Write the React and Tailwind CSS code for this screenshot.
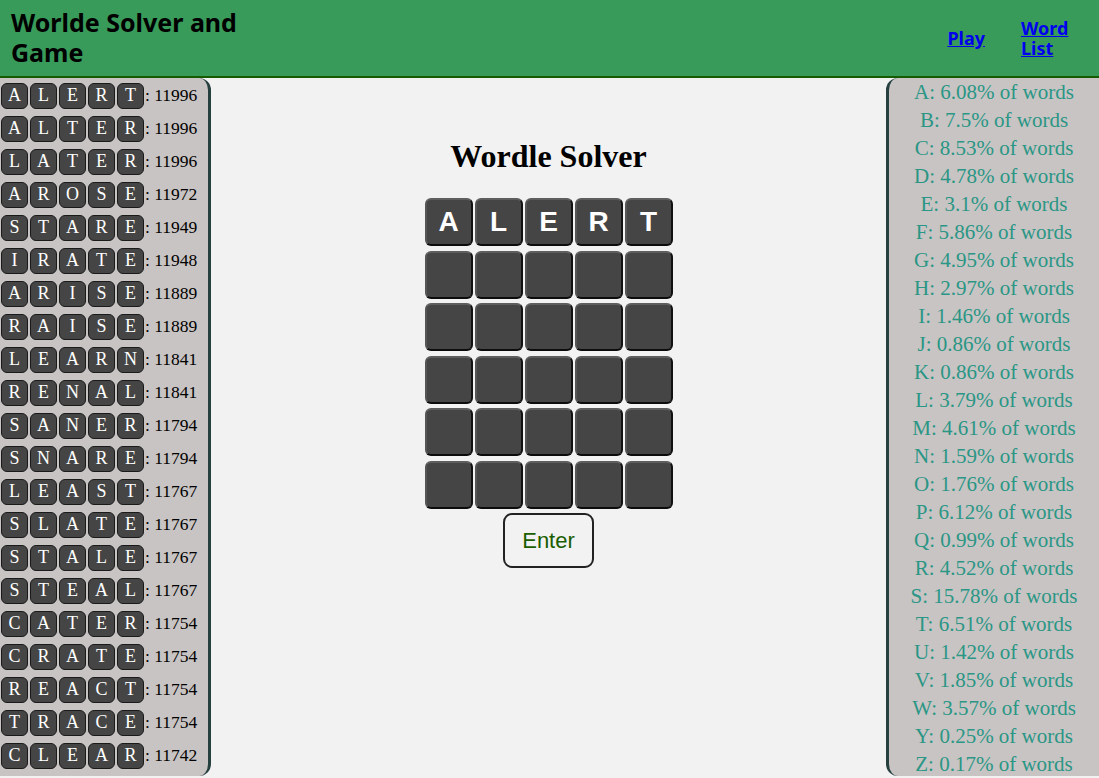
import React from "react";

const words = [
  ["ALERT", 11996],
  ["ALTER", 11996],
  ["LATER", 11996],
  ["AROSE", 11972],
  ["STARE", 11949],
  ["IRATE", 11948],
  ["ARISE", 11889],
  ["RAISE", 11889],
  ["LEARN", 11841],
  ["RENAL", 11841],
  ["SANER", 11794],
  ["SNARE", 11794],
  ["LEAST", 11767],
  ["SLATE", 11767],
  ["STALE", 11767],
  ["STEAL", 11767],
  ["CATER", 11754],
  ["CRATE", 11754],
  ["REACT", 11754],
  ["TRACE", 11754],
  ["CLEAR", 11742],
];

const freqs = [
  ["A", "6.08"], ["B", "7.5"], ["C", "8.53"], ["D", "4.78"], ["E", "3.1"],
  ["F", "5.86"], ["G", "4.95"], ["H", "2.97"], ["I", "1.46"], ["J", "0.86"],
  ["K", "0.86"], ["L", "3.79"], ["M", "4.61"], ["N", "1.59"], ["O", "1.76"],
  ["P", "6.12"], ["Q", "0.99"], ["R", "4.52"], ["S", "15.78"], ["T", "6.51"],
  ["U", "1.42"], ["V", "1.85"], ["W", "3.57"], ["Y", "0.25"], ["Z", "0.17"],
];

const guesses = ["ALERT", "", "", "", "", ""];

const WordRow = ({ word, score }) => (
  <div className="flex items-center h-[33px]">
    {word.split("").map((l, i) => (
      <span
        key={i}
        className="w-[27px] h-[26px] ml-[1px] mr-[1px] flex items-center justify-center bg-[#454545] border border-[#1a1a1a] rounded-[6px] text-white text-[18px]"
      >
        {l}
      </span>
    ))}
    <span className="text-[17.5px] text-black">: {score}</span>
  </div>
);

export default function App() {
  return (
    <div className="bg-[#f2f2f2] flex flex-col overflow-hidden h-[778px]">
      <header className="h-[78px] bg-[#389b5a] border-b-2 border-[#155c00] flex items-center justify-between pl-[11px] pr-[30px] shrink-0">
        <h1 className="w-[260px] text-[25px] leading-[30px] font-bold text-black font-['Noto_Sans',sans-serif] pb-[2px]">
          Worlde Solver and Game
        </h1>
        <nav className="flex items-center gap-[36px] font-['Noto_Sans',sans-serif] font-bold text-[18px] leading-[20px]">
          <a href="#" className="text-[#0000ee] underline">
            Play
          </a>
          <a href="#" className="text-[#0000ee] underline w-[48px]">
            Word List
          </a>
        </nav>
      </header>

      <main className="flex flex-1 min-h-0 font-['Liberation_Serif',serif]">
        <aside className="w-[211px] shrink-0 h-[698px] bg-[#c8c4c3] border-r-[3px] border-[#263f3f] rounded-r-[12px] overflow-hidden pt-[1px]">
          {words.map(([w, s]) => (
            <WordRow key={w} word={w} score={s} />
          ))}
        </aside>

        <section className="flex-1 flex flex-col items-center">
          <h2 className="mt-[60px] text-[32px] leading-[37px] font-bold text-black">
            Wordle Solver
          </h2>
          <div className="mt-[23px] grid grid-cols-5 gap-x-[2px] gap-y-[4.5px]">
            {guesses.map((g, r) =>
              [0, 1, 2, 3, 4].map((c) => (
                <div
                  key={`${r}-${c}`}
                  className="w-[48px] h-[48px] bg-[#454545] rounded-[6px] border-2 border-t-[#5e5e5e] border-l-[#555] border-r-[#111] border-b-[#0c0c0c] flex items-center justify-center text-white font-bold text-[28px] font-['Liberation_Sans',sans-serif]"
                >
                  {g[c] || ""}
                </div>
              ))
            )}
          </div>
          <button className="mt-[4px] w-[91px] h-[55px] rounded-[9px] border-2 border-[#222] bg-[#f2f2f2] text-[#1a5e00] text-[22px] font-['Liberation_Sans',sans-serif]">
            Enter
          </button>
        </section>

        <aside className="w-[213px] shrink-0 h-[698px] bg-[#c8c4c3] border-l-[3px] border-[#263f3f] rounded-l-[12px] overflow-hidden text-center text-[21px] leading-[28px] text-[#2a9685]">
          {freqs.map(([l, p]) => (
            <div key={l}>
              {l}: {p}% of words
            </div>
          ))}
        </aside>
      </main>
    </div>
  );
}
